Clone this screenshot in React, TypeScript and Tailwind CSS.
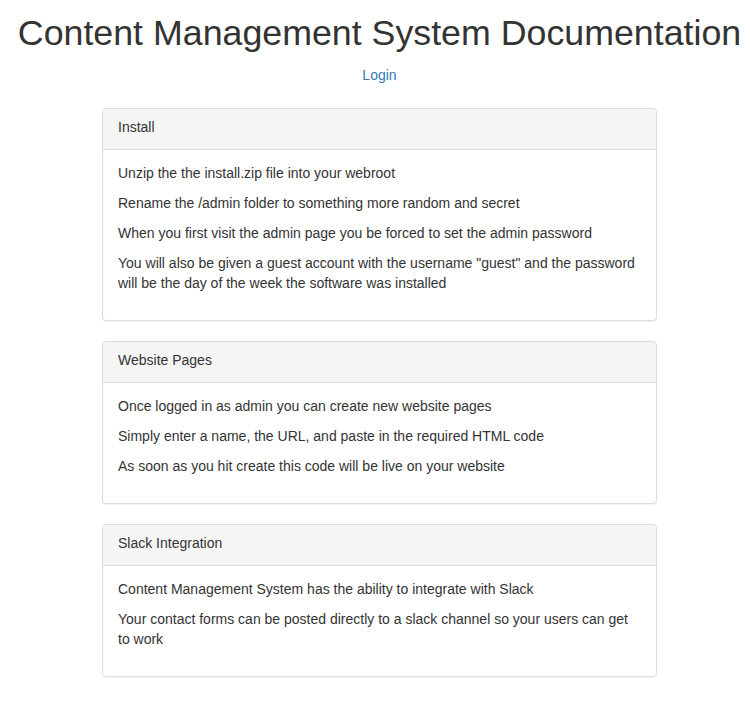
import React from "react";

const panels: { title: string; items: string[] }[] = [
  {
    title: "Install",
    items: [
      "Unzip the the install.zip file into your webroot",
      "Rename the /admin folder to something more random and secret",
      "When you first visit the admin page you be forced to set the admin password",
      'You will also be given a guest account with the username "guest" and the password will be the day of the week the software was installed',
    ],
  },
  {
    title: "Website Pages",
    items: [
      "Once logged in as admin you can create new website pages",
      "Simply enter a name, the URL, and paste in the required HTML code",
      "As soon as you hit create this code will be live on your website",
    ],
  },
  {
    title: "Slack Integration",
    items: [
      "Content Management System has the ability to integrate with Slack",
      "Your contact forms can be posted directly to a slack channel so your users can get to work",
    ],
  },
];

export default function App() {
  return (
    <div
      className="min-h-[704px] bg-white text-[#333] text-[14px] leading-[20px]"
      style={{ fontFamily: '"Liberation Sans", Arial, Helvetica, sans-serif' }}
    >
      <div className="ml-[9px] w-[741px] pt-[14px]">
        <h1 className="text-center text-[35.75px] leading-[39.6px] font-normal whitespace-nowrap">
          Content Management System Documentation
        </h1>
        <div className="mt-[11px] text-center">
          <a href="#" className="text-[#337ab7]">
            Login
          </a>
        </div>
        <div className="mt-[23px] mx-auto w-[555px] flex flex-col gap-[20px]">
          {panels.map((p) => (
            <div
              key={p.title}
              className="border border-[#ddd] rounded-[4px] bg-white shadow-[0_1px_1px_rgba(0,0,0,0.05)]"
            >
              <div className="bg-[#f5f5f5] border-b border-[#ddd] rounded-t-[3px] px-[15px] pt-[8px] pb-[12px]">
                {p.title}
              </div>
              <div className="px-[15px] pt-[13px] pb-[17px]">
                {p.items.map((t, i) => (
                  <p key={i} className="mb-[10px]">
                    {t}
                  </p>
                ))}
              </div>
            </div>
          ))}
        </div>
      </div>
    </div>
  );
}
